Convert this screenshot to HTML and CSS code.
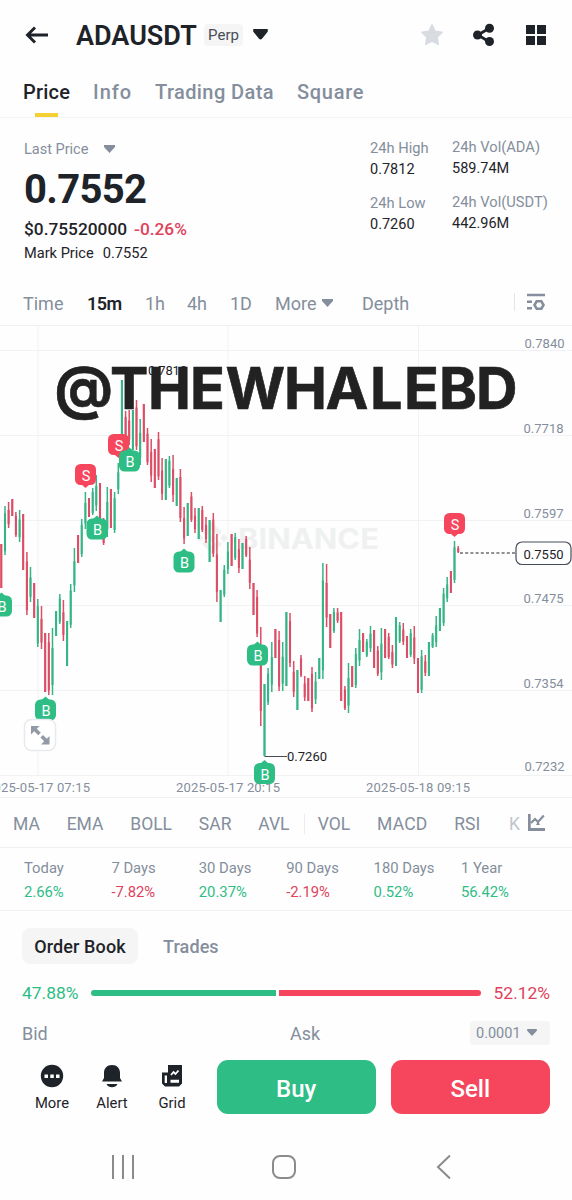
FILE: index.html
```html
<!DOCTYPE html>
<html lang="en">
<head>
    <title>ADAUSDT Perp</title>
    <meta charset="UTF-8">
    <meta name="viewport" content="width=device-width, initial-scale=1.0">
    <link rel="stylesheet" href="styles.css">
</head>
<body>
    <div class="app">
        <header class="header">
            <svg class="back" width="24" height="20" viewBox="0 0 24 20"><path d="M23 10H3M10 2.500L2.500 10l7.500 7.500" fill="none" stroke="#1e2329" stroke-width="2.900"/></svg>
            <h1 class="symbol">ADAUSDT</h1>
            <span class="perp">Perp</span>
            <svg class="symbol-caret" width="15" height="11" viewBox="0 0 15 11"><path d="M1 0h13a1 1 0 0 1 .7 1.700v1L9 9.700q-1.500 1.500-3 0L.3 2.700v-1A1 1 0 0 1 1 0z" fill="#1e2329"/></svg>
            <div class="header-icons">
                <svg width="24" height="24" viewBox="0 0 24 24"><path d="M12 1.800l3.100 6.500 7.100 1-5.100 5 1.200 7.100L12 18.100l-6.300 3.300 1.200-7.100-5.100-5 7.100-1z" fill="#d8dce1" stroke="#d8dce1" stroke-width="1.500" stroke-linejoin="round"/></svg>
                <svg width="24" height="24" viewBox="0 0 24 24"><path d="M17.500 5L6 12l11.500 7" fill="none" stroke="#1e2329" stroke-width="2.800"/><circle cx="5.500" cy="12" r="4.500" fill="#1e2329"/><circle cx="17.500" cy="5.200" r="4.500" fill="#1e2329"/><circle cx="17.500" cy="18.500" r="4.500" fill="#1e2329"/></svg>
                <svg width="24" height="24" viewBox="0 0 24 24"><path d="M2 2h9v9H2zM13 2h9v9h-9zM2 13h9v9H2zM13 13h9v9h-9z" fill="#1e2329"/></svg>
            </div>
        </header>

        <nav class="tabs">
            <a class="tab active">Price</a>
            <a class="tab info">Info</a>
            <a class="tab trading">Trading Data</a>
            <a class="tab square">Square</a>
        </nav>

        <section class="ticker">
            <div class="price-block">
                <div class="last-label">Last Price <svg width="11" height="8" viewBox="0 0 11 8"><path d="M0 0h11v2L5.500 8 0 2z" fill="#848e9c"/></svg></div>
                <div class="last-price">0.7552</div>
                <div class="fiat"><span>$0.75520000</span><span class="down">-0.26%</span></div>
                <div class="mark"><span>Mark Price</span><span class="mark-value">0.7552</span></div>
            </div>
            <div class="stats">
                <div class="label">24h High</div>
                <div class="value">0.7812</div>
                <div class="label">24h Low</div>
                <div class="value">0.7260</div>
            </div>
            <div class="stats volume">
                <div class="label">24h Vol(ADA)</div>
                <div class="value">589.74M</div>
                <div class="label">24h Vol(USDT)</div>
                <div class="value">442.96M</div>
            </div>
        </section>

        <nav class="intervals">
            <span>Time</span>
            <span class="active">15m</span>
            <span>1h</span>
            <span>4h</span>
            <span>1D</span>
            <span>More <svg width="11" height="8" viewBox="0 0 11 8"><path d="M0 0h11v2L5.500 8 0 2z" fill="#848e9c"/></svg></span>
            <span>Depth</span>
            <span class="chart-settings">
                <svg width="18" height="18" viewBox="0 0 18 18"><path d="M0 2h18M0 8.800h5M0 15.200h5" stroke="#848e9c" stroke-width="2.400"/><path d="M9.700 8.200h4.600l2.200 3.800-2.200 3.800H9.700L7.500 12z" fill="none" stroke="#848e9c" stroke-width="2.600"/></svg>
            </span>
        </nav>

        <svg class="chart" width="572" height="471" viewBox="0 326 572 471">
            <g class="grid">
                <path d="M0 350.500H572M0 435.500H572M0 520.500H572M0 605.500H572M0 690.500H572M0 775.500H572M38 325V775M228 325V775M418.500 325V775"/>
            </g>
            <g class="watermark">
                <path d="M212 522l10 10-4 4-6-6-6 6-4-4zM212 554l10-10-4-4-6 6-6-6-4 4zM212 534l4.500 4-4.500 4-4.500-4zM200 534l4 4-4 4-4-4zM224 534l4 4-4 4-4-4z"/>
                <text x="238" y="548.500" textLength="141" lengthAdjust="spacingAndGlyphs">BINANCE</text>
            </g>
            <g id="candles"></g>
            <g class="axis">
                <text x="524.500" y="347.500" textLength="40">0.7840</text>
                <text x="523.500" y="432.500" textLength="40">0.7718</text>
                <text x="523.500" y="517.500" textLength="40">0.7597</text>
                <text x="523.500" y="602.500" textLength="40">0.7475</text>
                <text x="523.500" y="687.500" textLength="40">0.7354</text>
                <text x="524.500" y="771" textLength="40">0.7232</text>
                <text x="-14" y="791.500" textLength="104">2025-05-17 07:15</text>
                <text x="176" y="791.500" textLength="104">2025-05-17 20:15</text>
                <text x="366" y="791.500" textLength="104">2025-05-18 09:15</text>
            </g>
            <path d="M460 553H516" stroke="#1e2329" stroke-width="1.200" stroke-dasharray="3 2.200"/>
            <rect x="516" y="542" width="55" height="22.500" rx="6" fill="#fff" stroke="#474d57" stroke-width="1.200"/>
            <path d="M264.500 756.500H287" stroke="#474d57"/>
            <g class="marks">
                <text x="523.500" y="558.500" textLength="40">0.7550</text>
                <text x="287" y="761" textLength="40">0.7260</text>
                <text x="148" y="375" textLength="39">0.7812</text>
            </g>
            <g id="orders"></g>
            <rect x="24.500" y="719.500" width="31" height="31" rx="7" fill="#fff" stroke="#e8eaed" stroke-width="1.500"/>
            <path d="M31 726h8.500l-2.700 2.700 4 4-2.600 2.600-4-4-3.200 3.200zM49.500 744.500v-8.500l-2.700 2.700-3.800-3.800-2.600 2.600 3.800 3.800-3.200 3.200z" fill="#929aa5"/>
            <text class="handle" x="54.500 110 148 190 225.500 284 325.500 370 404 439 476" y="408 409">@THEWHALEBD</text>
        </svg>

        <nav class="indicators">
            <span>MA</span>
            <span>EMA</span>
            <span>BOLL</span>
            <span>SAR</span>
            <span>AVL</span>
            <span class="sub">VOL</span>
            <span>MACD</span>
            <span>RSI</span>
            <span class="faded">K</span>
            <svg width="17" height="17" viewBox="0 0 17 17"><path d="M1.300 0v15.500H17" fill="none" stroke="#848e9c" stroke-width="2.800"/><path d="M3 9l4-4 3 3 5.800-6.500" fill="none" stroke="#848e9c" stroke-width="2.200"/><path d="M10 7l2 4H8z" fill="#848e9c"/></svg>
        </nav>

        <section class="performance">
            <div>Today<span class="up">2.66%</span></div>
            <div>7 Days<span class="down">-7.82%</span></div>
            <div>30 Days<span class="up">20.37%</span></div>
            <div>90 Days<span class="down">-2.19%</span></div>
            <div>180 Days<span class="up">0.52%</span></div>
            <div>1 Year<span class="up">56.42%</span></div>
        </section>

        <nav class="book-tabs">
            <span class="active">Order Book</span>
            <span>Trades</span>
        </nav>

        <div class="ratio">
            <span class="up">47.88%</span>
            <div class="ratio-bar">
                <i class="bids"></i>
                <i class="asks"></i>
            </div>
            <span class="down">52.12%</span>
        </div>

        <div class="book-head">
            <span>Bid</span>
            <span>Ask</span>
            <span class="precision">0.0001 <svg width="10" height="7" viewBox="0 0 11 8"><path d="M0 0h11v2L5.500 8 0 2z" fill="#848e9c"/></svg></span>
        </div>

        <footer class="actions">
            <div class="action">
                <svg width="24" height="24" viewBox="0 0 24 24"><circle cx="12" cy="12" r="11.200" fill="#1e2329"/><path d="M4.500 10.500h3.500v3.500H4.500zM10.300 10.500h3.500v3.500h-3.500zM16 10.500h3.500v3.500H16z" fill="#fff"/></svg>
                More
            </div>
            <div class="action">
                <svg width="24" height="24" viewBox="0 0 24 24"><path d="M12 1c5 0 8 3.500 8 8v5l2 3.500H2L4 14V9c0-4.500 3-8 8-8zM6.500 20h11c-1 2.200-3 3.300-5.500 3.300S7.500 22.200 6.500 20z" fill="#1e2329"/></svg>
                Alert
            </div>
            <div class="action">
                <svg width="24" height="24" viewBox="0 0 24 24"><path d="M8 1h14v18.500l-3 3H5l-3-3V8.500h6z" fill="#1e2329"/><path d="M4.700 11.500h2.300v7.500H4.700zM10.500 15.700h8.500v3h-8.500z" fill="#fff"/><path d="M11 11l2.500-3 2 2 3-3.500" fill="none" stroke="#fff" stroke-width="1.800"/></svg>
                Grid
            </div>
            <button class="trade buy">Buy</button>
            <button class="trade sell">Sell</button>
        </footer>

        <div class="system-nav">
            <svg width="24" height="24" viewBox="0 0 24 24"><path d="M2 0v24M12 0v24M22 0v24"/></svg>
            <svg width="24" height="24" viewBox="0 0 24 24"><rect x="1" y="1" width="22" height="22" rx="7"/></svg>
            <svg width="24" height="24" viewBox="0 0 24 24"><path d="M18 .5L6 12l12 11.500"/></svg>
        </div>
    </div>
    <script src="chart.js"></script>
</body>
</html>
```
FILE: styles.css
```css
* { box-sizing: border-box; }
body {
    margin: 0;
    background: #fff;
    color: #1e2329;
    font-family: Roboto, "Open Sans", sans-serif;
}
.app {
    width: 572px;
    height: 1200px;
    overflow: hidden;
    background: #fefefe;
}
.up { color: #2ebd85; }
.down { color: #e0425a; }

/* header */
.header {
    display: flex;
    align-items: center;
    height: 69px;
    padding: 0 24px 0 25px;
}
.symbol {
    margin: 2px 0 0 27px;
    width: 121px;
    font-size: 27px;
    font-weight: 600;
}
.perp {
    margin-left: 7px;
    width: 39px;
    height: 22px;
    line-height: 22px;
    text-align: center;
    font-size: 15px;
    color: #474d57;
    background: #f5f5f5;
    border-radius: 4px;
}
.symbol-caret { margin-left: 10px; }
.header-icons {
    display: flex;
    gap: 28px;
    margin-left: auto;
}

.tabs {
    display: flex;
    gap: 23px;
    height: 49px;
    padding: 11px 23px 0;
    border-bottom: 1px solid #f3f4f5;
    font-size: 20px;
    font-weight: 500;
    line-height: 24px;
    letter-spacing: 0.2px;
    color: #848e9c;
}
.tab.active {
    position: relative;
    width: 47px;
    color: #1e2329;
}
.tab.active::after {
    content: "";
    position: absolute;
    left: 12px;
    bottom: 0;
    width: 23px;
    height: 4px;
    background: #f5d033;
}
.info { width: 39px; letter-spacing: 1px; }
.trading { width: 119px; letter-spacing: 0.4px; }
.square { letter-spacing: 0.7px; }

/* price summary */
.ticker {
    display: grid;
    grid-template-columns: 346px 82px 1fr;
    height: 162px;
    padding: 20px 0 0 24px;
}
.last-label {
    display: flex;
    align-items: center;
    gap: 16px;
    height: 22px;
    font-size: 14.5px;
    color: #848e9c;
}
.last-price {
    height: 58px;
    line-height: 60px;
    font-size: 40px;
    font-weight: 700;
    letter-spacing: -0.7px;
}
.fiat {
    display: flex;
    gap: 7px;
    line-height: 22px;
    font-size: 17.3px;
    font-weight: 500;
}
.mark {
    display: flex;
    gap: 9px;
    line-height: 26px;
    font-size: 14.6px;
}
.stats {
    font-size: 14.7px;
    line-height: 20px;
}
.stats.volume { margin-top: -1px; }
.label { color: #848e9c; }
.value {
    height: 34.5px;
    padding-top: 2px;
    font-size: 14.5px;
}

.intervals {
    display: grid;
    grid-template-columns: 64px 58px 42px 43px 45px 87px 152px 1fr;
    height: 45px;
    padding-left: 23px;
    line-height: 47px;
    font-size: 18px;
    color: #848e9c;
}
.intervals .active {
    color: #1e2329;
    font-weight: 600;
    letter-spacing: -0.5px;
}
.intervals svg { margin-left: 1px; vertical-align: 3px; }
.chart-settings {
    display: flex;
    align-items: center;
    height: 18px;
    margin-top: 13px;
    border-left: 1px solid #e3e5e8;
}
.chart-settings svg { margin-left: 12px; }

/* candle chart */
.chart {
    display: block;
    box-sizing: content-box;
    border-top: 1px solid #f0f1f2;
    border-bottom: 1px solid #f0f1f2;
    font-size: 13px;
}
.grid path { fill: none; stroke: #f1f2f3; }
.axis { fill: #848e9c; }
.marks { fill: #1e2329; }
.watermark {
    fill: #eff1f1;
    font-family: Inter, sans-serif;
    font-size: 28px;
    font-weight: 700;
}
.handle {
    fill: #222;
    font-family: Inter, sans-serif;
    font-size: 57.5px;
    font-weight: 700;
    stroke: #222;
    stroke-width: 0.6;
}
.wick { stroke-width: 1.5; }
.body { stroke-width: 2.1; }
.rise { stroke: #35b586; }
.fall { stroke: #dc4d66; }
.buy-mark { fill: #2ebd85; }
.sell-mark { fill: #f6465d; }
.order-text {
    fill: #fff;
    font-size: 14.5px;
    text-anchor: middle;
}

.indicators {
    display: flex;
    align-items: center;
    gap: 26.8px;
    height: 50px;
    padding: 3px 0 0 13px;
    border-bottom: 1px solid #f0f1f2;
    font-size: 17.5px;
    color: #848e9c;
}
.indicators .sub {
    margin-left: -12.5px;
    padding-left: 13px;
    border-left: 1px solid #eaecef;
}
.indicators .sub + span { letter-spacing: 0.2px; }
.faded { margin-left: 2px; opacity: 0.5; }
.indicators svg { margin: -3px 0 0 -19px; }

.performance {
    display: grid;
    grid-template-columns: repeat(6, 87.4px);
    height: 63px;
    padding: 8px 0 0 24px;
    border-bottom: 1px solid #f0f1f2;
    font-size: 14.8px;
    line-height: 24px;
    color: #848e9c;
}
.performance span { display: block; }

/* order book */
.book-tabs {
    display: flex;
    gap: 25px;
    height: 69px;
    padding: 17px 22px 0;
    font-size: 18px;
    font-weight: 500;
    line-height: 37px;
    letter-spacing: 0.1px;
    color: #848e9c;
}
.book-tabs .active {
    width: 116px;
    height: 36px;
    text-align: center;
    color: #1e2329;
    background: #f5f5f5;
    border-radius: 8px;
}
.ratio {
    display: flex;
    align-items: center;
    justify-content: space-between;
    height: 26px;
    padding: 0 22px;
    font-size: 17.4px;
}
.ratio-bar {
    display: flex;
    gap: 3px;
    width: 390px;
    height: 6px;
}
.bids {
    flex: 47.88;
    background: #2ebd85;
    border-radius: 3px 0 0 3px;
}
.asks {
    flex: 52.12;
    background: #f6465d;
    border-radius: 0 3px 3px 0;
}
.book-head {
    display: grid;
    grid-template-columns: 268px 180px 80px;
    align-items: center;
    height: 54px;
    padding-left: 22px;
    font-size: 18px;
    color: #848e9c;
}
.precision {
    height: 24px;
    margin-top: -1px;
    padding-left: 6px;
    line-height: 25px;
    font-size: 14.5px;
    background: #f5f5f5;
    border-radius: 4px;
}
.precision svg { margin-left: 3px; vertical-align: 2px; }

/* bottom bar */
.actions {
    display: flex;
    height: 90px;
    padding-left: 22px;
}
.action {
    display: flex;
    flex-direction: column;
    align-items: center;
    gap: 6px;
    width: 60px;
    padding-top: 4px;
    font-size: 14.8px;
}
.trade {
    width: 159.5px;
    height: 54px;
    margin-left: 14.5px;
    padding-top: 4px;
    border: 0;
    border-radius: 11px;
    color: #fff;
    font: 500 24px Roboto, sans-serif;
}
.buy { background: #2ebd85; }
.sell { background: #f6465d; }

.system-nav {
    display: flex;
    justify-content: space-between;
    padding: 5px 116px 0 111px;
}
.system-nav svg {
    fill: none;
    stroke: #8b8b8b;
    stroke-width: 2;
}
```
FILE: chart.js
```js
// direction, high, low (chart coordinates), one entry per 15m candle
// r = rise, f = fall
const candles = `
f544-588 r506-555 f502-528 f499-516 f512-537 r510-542 f514-570 f552-615 r567-602 f583-618
r599-647 f606-649 f633-692 f633-695 r628-695 r611-636 r594-624 f600-641 r621-666 r584-628
r548-592 f535-563 r519-557 r492-529 f498-517 r488-515 r475-511 f483-520 f518-545 r487-537
f489-528 r492-533 r463-494 r380-447 f411-450 f410-445 r410-450 f400-450 r419-465 f404-442
f428-465 f439-482 f449-488 f432-480 f458-500 r459-500 r456-488 f455-502 r478-506 f469-522
f507-544 r503-536 f492-522 f508-533 r508-539 f506-532 f517-543 r520-562 f513-557 f534-602
r590-622 r565-597 r542-574 f534-566 r533-560 f539-573 r543-569 f536-557 f547-589 f583-615
f590-637 f627-726 r684-756 r668-705 r642-692 f629-658 f631-691 r642-691 r612-686 f613-667
f661-697 r670-710 f655-677 f676-701 f678-701 f667-712 r672-704 r658-679 r563-679 f564-627
f614-648 r608-633 f608-623 f612-701 f686-710 r663-713 f666-687 r648-688 r629-666 f633-652
r639-657 r626-652 f630-668 f646-676 r628-680 f629-658 f633-659 f645-668 r617-666 r622-643
f623-645 f636-658 r629-657 f626-664 f658-693 r650-693 f655-676 r642-676 r633-648 r616-647
r608-631 r588-626 r577-602 f571-593 r541-583 f546-553`.trim().split(/\s+/);

document.getElementById('candles').innerHTML = candles.map((c, i) => {
    const x = (1.3 + i * 3.655).toFixed(1);
    const [high, low] = c.slice(1).split('-').map(Number);
    const inset = (low - high) * (i % 3) * 0.15;
    const side = c[0] === 'r' ? 'rise' : 'fall';
    return `<path class="wick ${side}" d="M${x} ${high}V${low}"/>
        <path class="body ${side}" d="M${x} ${high + inset}V${low - inset / 2}"/>`;
}).join('');

// S badges point down at the candle, B badges point up
const orders = [
    ['S', 85.5, 474.5], ['S', 118.5, 444.5], ['B', 129.5, 461], ['B', 97, 529],
    ['B', 184, 562], ['B', 1.5, 606], ['B', 45.5, 710], ['B', 257.5, 655],
    ['B', 264.5, 773.5], ['S', 454.5, 523.5]
];

document.getElementById('orders').innerHTML = orders.map(([side, x, y]) => {
    const dir = side === 'S' ? 1 : -1;
    const name = side === 'S' ? 'sell-mark' : 'buy-mark';
    return `<g class="${name}">
        <rect x="${x - 10.5}" y="${y - 10.5}" width="21" height="21" rx="5.5"/>
        <path d="M${x - 4} ${y + dir * 10}L${x} ${y + dir * 13.5}L${x + 4} ${y + dir * 10}z"/>
        <text class="order-text" x="${x + 0.5}" y="${y + 6}">${side}</text>
    </g>`;
}).join('');
```
